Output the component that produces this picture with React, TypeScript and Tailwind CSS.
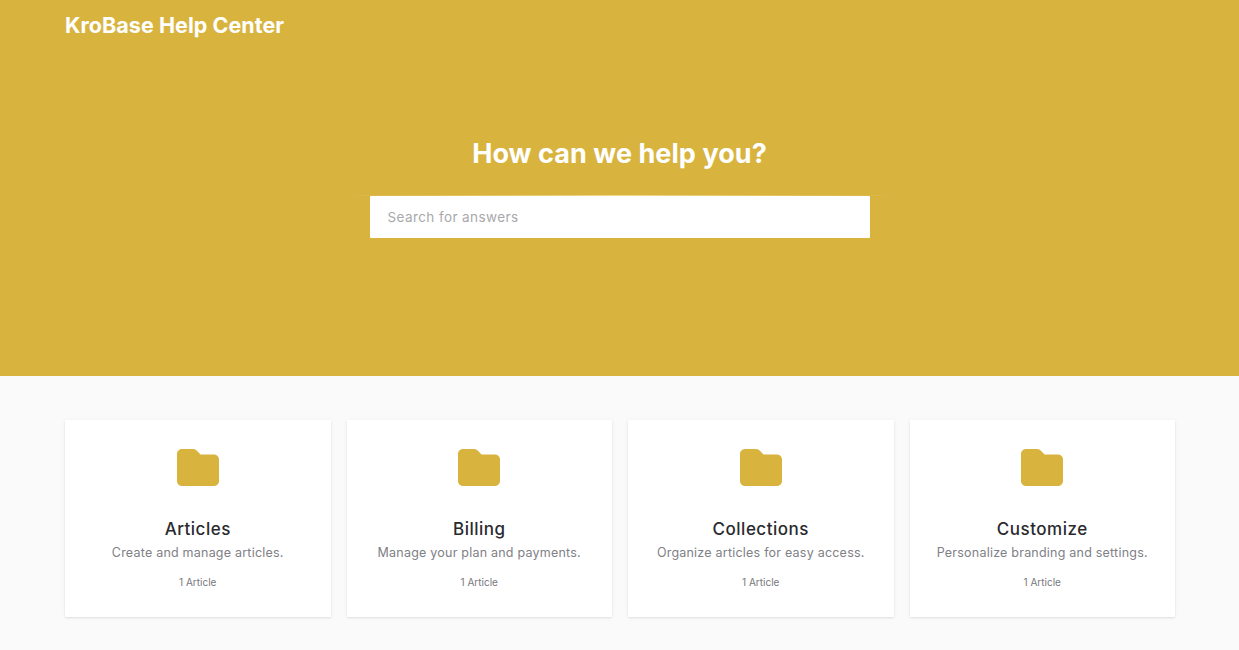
const categories = [
  { title: 'Articles', description: 'Create and manage articles.' },
  { title: 'Billing', description: 'Manage your plan and payments.' },
  { title: 'Collections', description: 'Organize articles for easy access.' },
  { title: 'Customize', description: 'Personalize branding and settings.' },
];

const FolderIcon = () => (
  <svg width="42" height="37" viewBox="0 0 42 37" className="text-[#d8b43f]">
    <path
      fill="currentColor"
      d="M5 0H16C18 0 19 .8 20.2 2L23.5 5.5H37C39.8 5.5 42 7.7 42 10.5V32C42 34.8 39.8 37 37 37H5C2.2 37 0 34.8 0 32V5C0 2.2 2.2 0 5 0Z"
    />
  </svg>
);

const CategoryCard = ({ title, description }: { title: string; description: string }) => (
  <div className="flex h-[197px] flex-col items-center bg-white pt-[29px] shadow-[0_1px_2px_rgba(0,0,0,0.10),0_0_6px_rgba(0,0,0,0.03)]">
    <FolderIcon />
    <h3 className="mt-[32px] text-[17px] leading-[22px] font-medium tracking-[0.5px] text-[#2a2a2e]">{title}</h3>
    <p className="mt-[3px] text-[12.5px] leading-[20px] tracking-[0.22px] whitespace-nowrap text-[#808086]">{description}</p>
    <span className="mt-[9px] text-[10px] leading-[20px] text-[#77777c]">1 Article</span>
  </div>
);

export default function App() {
  return (
    <div className="h-[650px] overflow-hidden bg-[#fafafb] font-['Inter','Liberation_Sans',sans-serif]">
      <header className="h-[376px] bg-[#d8b43f]">
        <div className="ml-[65px] pt-[11px]">
          <span className="text-[21.5px] leading-[28px] font-bold tracking-[0.05px] text-white">KroBase Help Center</span>
        </div>
        <div className="mt-[98px] flex flex-col items-center">
          <h1 className="text-[27px] leading-[34px] font-bold tracking-[0.05px] text-white">How can we help you?</h1>
          <div className="mt-[24px] h-px w-[560px] bg-gradient-to-r from-transparent via-[#f0d98a] to-transparent" />
          <input
            type="text"
            placeholder="Search for answers"
            className="h-[42px] w-[500px] rounded-[1px] bg-white px-[18px] text-[13.5px] tracking-[0.4px] text-[#555] outline-none placeholder:text-[#a8a8ac]"
          />
        </div>
      </header>
      <main className="mt-[44px] ml-[65px] grid w-[1110px] grid-cols-4 gap-4">
        {categories.map((category) => (
          <CategoryCard key={category.title} {...category} />
        ))}
      </main>
    </div>
  );
}
